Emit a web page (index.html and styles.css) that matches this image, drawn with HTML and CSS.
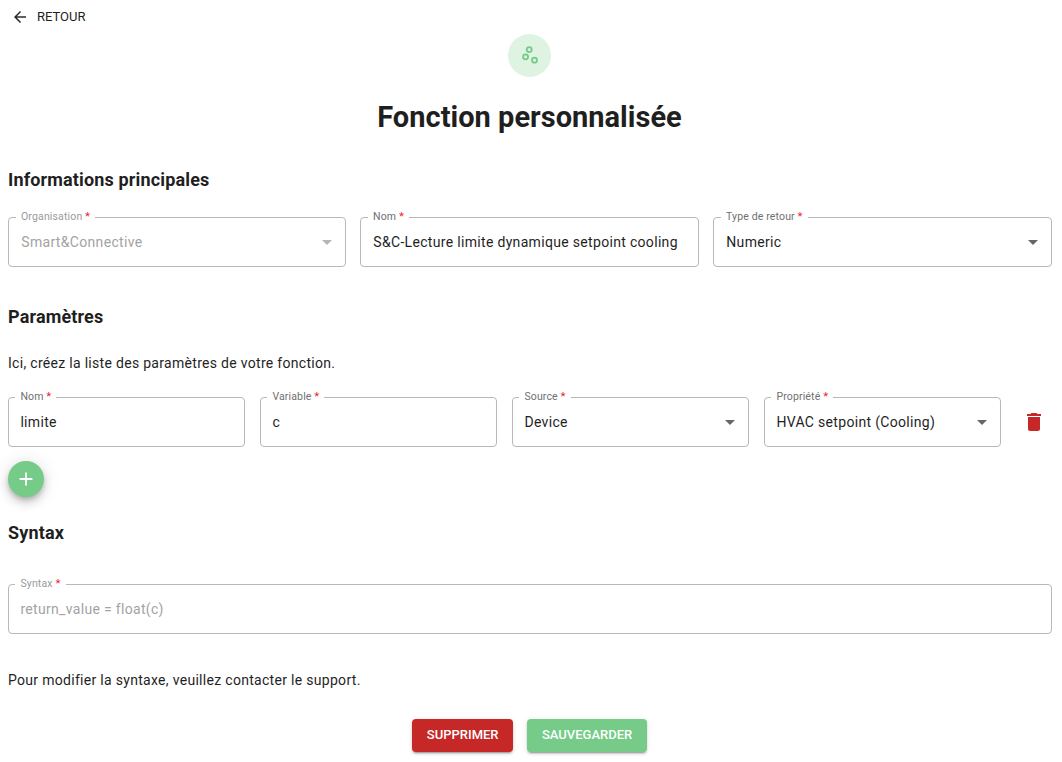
FILE: index.html
```html
<!DOCTYPE html>
<html lang="fr">
<head>
<meta charset="utf-8">
<title>Fonction personnalisée</title>
<link rel="stylesheet" href="styles.css">
</head>
<body>
<header class="top">
  <a class="back">
    <svg class="back-icon" viewBox="0 0 24 24"><path d="M20 11H7.83l5.59-5.59L12 4l-8 8 8 8 1.41-1.41L7.83 13H20v-2z"/></svg>
    <span class="back-label">RETOUR</span>
  </a>
</header>
<div class="badge">
  <svg viewBox="0 0 24 24" class="badge-icon"><circle cx="11.2" cy="5.6" r="2.5" /><circle cx="7.6" cy="12.8" r="2.5" /><circle cx="16.5" cy="16.2" r="2.5" /></svg>
</div>
<h1>Fonction personnalisée</h1>

<h2 class="h-info">Informations principales</h2>
<div class="row-three">
  <div class="field disabled"><span class="legend">Organisation <i>*</i></span><span class="value">Smart&amp;Connective</span><span class="caret"></span></div>
  <div class="field"><span class="legend">Nom <i>*</i></span><span class="value">S&amp;C-Lecture limite dynamique setpoint cooling</span></div>
  <div class="field"><span class="legend">Type de retour <i>*</i></span><span class="value">Numeric</span><span class="caret"></span></div>
</div>

<h2 class="h-param">Paramètres</h2>
<p class="intro">Ici, créez la liste des paramètres de votre fonction.</p>
<div class="row-params">
  <div class="field"><span class="legend">Nom <i>*</i></span><span class="value">limite</span></div>
  <div class="field"><span class="legend">Variable <i>*</i></span><span class="value">c</span></div>
  <div class="field"><span class="legend">Source <i>*</i></span><span class="value">Device</span><span class="caret"></span></div>
  <div class="field"><span class="legend">Propriété <i>*</i></span><span class="value">HVAC setpoint (Cooling)</span><span class="caret"></span></div>
  <svg class="trash" viewBox="0 0 24 24"><path d="M6 19c0 1.1.9 2 2 2h8c1.1 0 2-.9 2-2V7H6v12zM19 4h-3.5l-1-1h-5l-1 1H5v2h14V4z"/></svg>
</div>
<button class="fab" type="button"><svg viewBox="0 0 24 24"><path d="M19 13h-6v6h-2v-6H5v-2h6V5h2v6h6v2z"/></svg></button>

<h2 class="h-syntax">Syntax</h2>
<div class="field disabled syntax"><span class="legend">Syntax <i>*</i></span><span class="value">return_value = float(c)</span></div>
<p class="note">Pour modifier la syntaxe, veuillez contacter le support.</p>

<div class="actions">
  <button class="btn danger" type="button">SUPPRIMER</button>
  <button class="btn success" type="button">SAUVEGARDER</button>
</div>
</body>
</html>
```

FILE: styles.css
```css
* { box-sizing: border-box; }
html, body { margin: 0; height: 762px; overflow: hidden; }
body {
  background: #fff;
  color: #1f1f1f;
  font-family: Roboto, "Liberation Sans", sans-serif;
  font-size: 14px;
  padding: 0 10px 0 8px;
}
.top { height: 34px; display: flex; align-items: center; }
.back { display: flex; align-items: center; gap: 8px; font-size: 13px; padding-left: 3px; color: #1f1f1f; }
.back-label { margin-bottom: 2px; }
.back-icon { width: 18px; height: 18px; fill: #2b2b2b; }
.badge {
  width: 43px; height: 43px; border-radius: 50%;
  background: #dff3e2;
  margin: 0 auto;
  position: relative; left: -0.5px;
  display: flex; align-items: center; justify-content: center;
}
.badge-icon { width: 24px; height: 24px; fill: none; stroke: #75cb87; stroke-width: 1.8; }
h1 {
  margin: 0;
  height: 38px;
  margin-top: 21px;
  font-size: 29px; line-height: 38px; font-weight: 700; text-align: center;
  letter-spacing: 0.02px;
  position: relative; left: -0.5px;
  color: #1f1f1f;
}
h2 { margin: 0; font-size: 18px; line-height: 24px; font-weight: 700; letter-spacing: 0.15px; color: #1f1f1f; }
.h-info { margin-top: 32px; }
.h-param { margin-top: 38px; }
.h-syntax { margin-top: 24px; }
.row-three { display: grid; grid-template-columns: 338px 339px 339px; column-gap: 14px; margin-top: 25px; }
.field {
  position: relative;
  height: 50px;
  border: 1px solid #b8b8b8;
  border-radius: 4px;
  display: flex; align-items: center;
  padding: 0 11.4px;
  font-size: 14px;
  letter-spacing: 0.32px;
  color: #1f1f1f;
}
.row-three .field { padding: 0 12.3px; }
.row-three .legend { left: 7px; }
.legend {
  position: absolute; left: 6.4px; top: -8px;
  padding: 0 5px;
  background: #fff;
  font-size: 10.5px; line-height: 14px;
  letter-spacing: 0.15px;
  color: #6f6f6f;
}
.legend i { color: #f01e1e; font-style: normal; font-size: 11.5px; line-height: 0; }
.value { white-space: nowrap; }
.caret {
  position: absolute; right: 13px; top: 22px;
  width: 0; height: 0;
  border-left: 5px solid transparent;
  border-right: 5px solid transparent;
  border-top: 5px solid #666;
}
.disabled { color: #a3a3a3; }
.disabled .legend { color: #9a9a9a; }
.disabled .caret { border-top-color: #b5b5b5; }
.intro { margin: 24px 0 0; line-height: 20px; letter-spacing: 0.3px; color: #1f1f1f; }
.row-params { display: grid; grid-template-columns: repeat(4, 237px) 24px; column-gap: 15px; align-items: center; margin-top: 24px; }
.trash { width: 24px; height: 24px; fill: #c62828; margin-left: 6px; }
.fab {
  display: flex; align-items: center; justify-content: center;
  width: 36px; height: 36px; border: 0; padding: 0; border-radius: 50%;
  background: #75cb87; margin-top: 14px;
  box-shadow: 0 3px 5px -1px rgba(0,0,0,.2), 0 6px 10px 0 rgba(0,0,0,.14), 0 1px 18px 0 rgba(0,0,0,.12);
}
.fab svg { width: 22px; height: 22px; fill: #fff; }
.syntax { margin-top: 39px; width: 1044px; }
.note { margin: 36px 0 0; line-height: 20px; letter-spacing: 0.3px; color: #1f1f1f; }
.actions { display: flex; justify-content: center; gap: 14px; margin-top: 29px; position: relative; left: -0.5px; }
.btn {
  height: 33px; border: 0; border-radius: 4px; color: #fff; font-family: inherit;
  font-size: 13px; font-weight: 500; padding: 0 14.7px 2px;
  box-shadow: 0 3px 1px -2px rgba(0,0,0,.2), 0 2px 2px 0 rgba(0,0,0,.14), 0 1px 5px 0 rgba(0,0,0,.12);
}
.danger { background: #c62828; }
.success { background: #75cb87; }
```
